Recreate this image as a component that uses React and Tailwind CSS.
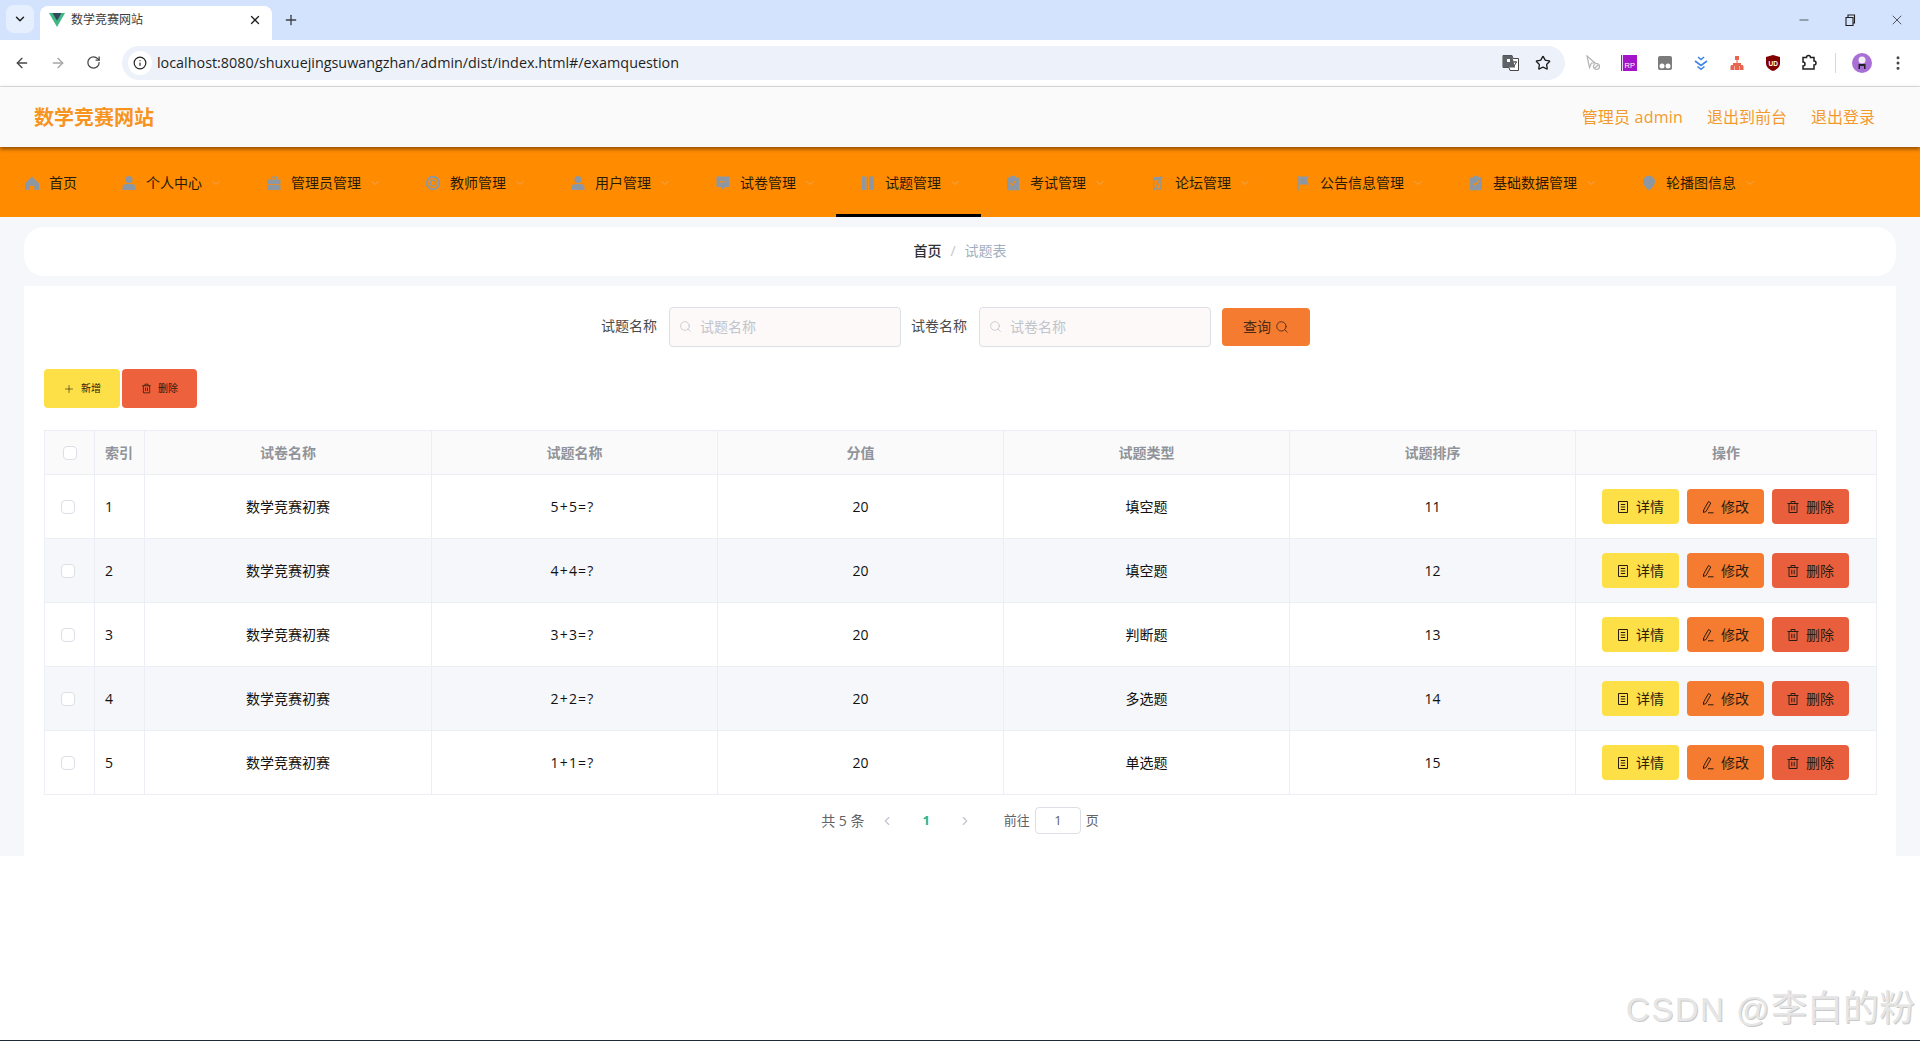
import React from "react"
import { ArrowLeft, ArrowRight, ChevronDown, ChevronLeft, ChevronRight, EllipsisVertical, Info, Minus, Plus, RotateCw, Search, Star, X } from "lucide-react"

const HomeIcon = () => <path d="M8 1.5 15 8.2V15h-4.6v-4.2H5.6V15H1V8.2z" />
const UserIcon = () => <><circle cx="8" cy="4.6" r="3.6" /><path d="M1.5 15v-2.6C1.5 10 3.5 9 5 9h6c1.5 0 3.5 1 3.5 3.4V15z" /></>
const CaseIcon = () => <><path d="M5 1.5h6v3H9.8V2.8H6.2v1.7H5z" /><path d="M1.5 4.5h13v4.4h-13zM1.5 9.8h13V15h-13z" /></>
const RingIcon = () => <path fillRule="evenodd" d="M8 .8a7.2 7.2 0 1 1 0 14.4A7.2 7.2 0 0 1 8 .8zm0 2a5.2 5.2 0 1 0 0 10.4A5.2 5.2 0 0 0 8 2.800zm0 1.700a3.500 3.500 0 1 1 0 7 3.500 3.500 0 0 1 0-7zm0 1.300a2.200 2.200 0 1 0 0 4.400 2.200 2.200 0 0 0 0-4.400z" />
const CommentIcon = () => <path fillRule="evenodd" d="M1.500 1.500h13v10.500H10L8 15l-2-3H1.500zM5 6v1.500h1.500V6zm2.300 0v1.500h1.500V6zm2.300 0v1.500h1.500V6z" />
const BarsIcon = () => <path d="M2 1.500h3.500V15H2zM6.500 1.500H8V15H6.500zM9 1.500h5V15H9z" />
const ClaimIcon = () => <path fillRule="evenodd" d="M5.500.8h5v1.700H14V15.200H2V2.500h3.500zM5 8.500l2.300 2.500L11.200 6l-.8-.7-3.200 4-1.500-1.500z" />
const SlashIcon = () => <path d="M4 2h8.500v1.200l-1 .8V14.500H3V5zM4.200 5.500v7.800h6.100V4.600zM11 .5l1 .5L5 15.500l-1-.5z" />
const FlagIcon = () => <path d="M2.500 1h1.300v14.500H2.500zM4.500 1.500H14L11.500 5 14 9.500H4.500z" />
const PinIcon = () => <path d="M8 .8c3.500 0 6 2.600 6 5.800 0 3.500-3.400 7-6 8.800-2.600-1.800-6-5.300-6-8.800C2 3.400 4.500.8 8 .8z" />

const navItems = [
  { label: "首页", icon: HomeIcon, arrow: false },
  { label: "个人中心", icon: UserIcon, arrow: true },
  { label: "管理员管理", icon: CaseIcon, arrow: true },
  { label: "教师管理", icon: RingIcon, arrow: true },
  { label: "用户管理", icon: UserIcon, arrow: true },
  { label: "试卷管理", icon: CommentIcon, arrow: true },
  { label: "试题管理", icon: BarsIcon, arrow: true, active: true },
  { label: "考试管理", icon: ClaimIcon, arrow: true },
  { label: "论坛管理", icon: SlashIcon, arrow: true },
  { label: "公告信息管理", icon: FlagIcon, arrow: true },
  { label: "基础数据管理", icon: ClaimIcon, arrow: true },
  { label: "轮播图信息", icon: PinIcon, arrow: true },
]

const rows = [
  { id: 1, paper: "数学竞赛初赛", name: "5+5=?", score: 20, type: "填空题", sort: 11 },
  { id: 2, paper: "数学竞赛初赛", name: "4+4=?", score: 20, type: "填空题", sort: 12 },
  { id: 3, paper: "数学竞赛初赛", name: "3+3=?", score: 20, type: "判断题", sort: 13 },
  { id: 4, paper: "数学竞赛初赛", name: "2+2=?", score: 20, type: "多选题", sort: 14 },
  { id: 5, paper: "数学竞赛初赛", name: "1+1=?", score: 20, type: "单选题", sort: 15 },
]

function TicketIcon() {
  return (
    <svg width="14" height="14" viewBox="0 0 14 14" fill="none" stroke="currentColor" strokeWidth="1">
      <path d="M2.500 1.500h9v11h-9zM4.800 4.500h4.400M4.800 7h4.400M4.800 9.500h4.400" />
    </svg>
  )
}

function EditIcon() {
  return (
    <svg width="14" height="14" viewBox="0 0 14 14" fill="none" stroke="currentColor" strokeWidth="1">
      <path d="M7.500 1.500 9.800 3 5 11.500l-2.600 1L2.700 10zM7 12.800h5.500" />
    </svg>
  )
}

function TrashIcon({ size = 14 }) {
  return (
    <svg width={size} height={size} viewBox="0 0 14 14" fill="none" stroke="currentColor" strokeWidth="1">
      <path d="M1.500 3.500h11M5 3.500V1.500h4v2M3 3.500v9h8v-9M5.800 5.800v4.500M8.200 5.800v4.500" />
    </svg>
  )
}

function NavBar() {
  return (
    <nav className="flex h-[70px] items-stretch bg-[#ff8c00] text-sm text-[#2a1a08]">
      {navItems.map((item) => {
        const Icon = item.icon
        return (
          <div
            key={item.label}
            className={`flex items-center border-b-[3px] pl-6 pt-1 pr-5 ${item.active ? "border-black" : "border-transparent"}`}
          >
            <svg width="16" height="16" viewBox="0 0 16 16" fill="#8d97a3" className="mr-[9px] shrink-0">
              <Icon />
            </svg>
            <span>{item.label}</span>
            {item.arrow && <ChevronDown size={12} strokeWidth={1.5} className="ml-2 text-[#dcb183]" />}
          </div>
        )
      })}
    </nav>
  )
}

function BrowserChrome() {
  return (
    <>
      <div className="flex h-10 items-end bg-[#d3e3fd] pl-[6px]">
        <div className="mb-[7px] flex h-7 w-7 items-center justify-center rounded-lg bg-[#e6effd]">
          <ChevronDown size={14} strokeWidth={2.5} className="text-[#1f1f1f]" />
        </div>
        <div className="ml-[6px] flex h-[34px] w-[232px] items-center rounded-t-lg bg-white pb-[6px] pl-[9px] pr-[10px] text-xs text-[#3c3c3c]">
          <svg width="16" height="14" viewBox="0 0 16 14" className="mr-[6px] shrink-0">
            <path d="M0 0h16L8 14z" fill="#41b883" />
            <path d="M3.500 0h9L8 7.800z" fill="#35495e" />
          </svg>
          <span>数学竞赛网站</span>
          <X size={14} strokeWidth={2.2} className="ml-auto text-[#1f1f1f]" />
        </div>
        <Plus size={16} strokeWidth={2} className="mb-3 ml-[11px] text-[#3c4043]" />
        <div className="mb-3 ml-auto flex items-center gap-8 pr-[15px] text-[#1f1f1f]">
          <Minus size={14} strokeWidth={1.2} />
          <svg width="14" height="14" viewBox="0 0 14 14" fill="none" stroke="currentColor" strokeWidth="1.100">
            <path d="M3 4.500h7v8H3zM5 4.500V2h6.500v8H10" />
          </svg>
          <X size={16} strokeWidth={1.1} />
        </div>
      </div>
      <div className="flex h-[47px] items-center border-b border-[#dfe1e5] bg-white pb-px">
        <div className="flex w-[122px] shrink-0 items-center gap-5 pl-[14px]">
          <ArrowLeft size={16} strokeWidth={2} className="text-[#474747]" />
          <ArrowRight size={16} strokeWidth={2} className="text-[#a6a6a6]" />
          <RotateCw size={15} strokeWidth={2} className="text-[#474747]" />
        </div>
        <div className="flex h-[34px] w-[1443px] shrink-0 items-center rounded-full bg-[#edf2fa] pl-[6px] pr-[14px]">
          <div className="flex h-6 w-6 items-center justify-center rounded-full bg-white">
            <Info size={14} strokeWidth={2} className="text-[#1f1f1f]" />
          </div>
          <span className="ml-[5px] text-[14.35px] text-[#1f1f1f]">localhost:8080/shuxuejingsuwangzhan/admin/dist/index.html#/examquestion</span>
          <svg width="18" height="18" viewBox="0 0 18 18" className="ml-auto mr-[15px]">
            <path d="M1 1.500h9l1 3H16.500v12H8l-1-3H1z" fill="#fff" stroke="#474747" strokeWidth="1" />
            <path d="M1 1.500h9l3 12H1z" fill="#5f6368" />
            <path d="M5 5h3v3H5z" fill="#fff" />
            <path d="M11 8h4M13 7v1M11.500 13l3-5" stroke="#474747" strokeWidth="1" fill="none" />
          </svg>
          <Star size={16} strokeWidth={2} className="text-[#1f1f1f]" />
        </div>
        <div className="flex w-[270px] shrink-0 items-center gap-5 pl-[20px]">
          <svg width="16" height="16" viewBox="0 0 16 16" fill="none" stroke="#b4b4b4" strokeWidth="1.200">
            <path d="M2 1l8 7H6.500L4.500 12.500z" />
            <circle cx="11.500" cy="11.500" r="3" />
            <path d="M9.500 13.500l4-4" />
          </svg>
          <svg width="16" height="16" viewBox="0 0 16 16">
            <path d="M0 0h16v16H0z" fill="#a414c9" />
            <path d="M1.500 0v16" stroke="#f1d8f7" strokeWidth="1" />
            <text x="3.500" y="13" fontSize="7.500" fill="#fff" fontFamily="Liberation Sans">RP</text>
          </svg>
          <svg width="16" height="16" viewBox="0 0 16 16">
            <path d="M3 1h10a2 2 0 0 1 2 2v10a2 2 0 0 1-2 2H3a2 2 0 0 1-2-2V3a2 2 0 0 1 2-2z" fill="#7b7b7b" />
            <circle cx="5" cy="11" r="2.500" fill="#fff" />
            <circle cx="11" cy="11" r="2.500" fill="#fff" />
          </svg>
          <svg width="16" height="16" viewBox="0 0 16 16" fill="none" stroke="#3f84e5" strokeWidth="1.600">
            <path d="M5 2l3 2.500L11 2M2 6l6 4.500L14 6M4.500 11.500 8 14.300l3.500-2.800" />
          </svg>
          <svg width="16" height="16" viewBox="0 0 16 16" fill="#e8654f">
            <path d="M6 1h4v4H6zM7.500 5h1v3h-1zM2 10h12v1H2zM1.500 11h4v4h-4zM6 11h4v4H6zM10.500 11h4v4h-4zM4 8h8v2H4z" />
          </svg>
          <svg width="16" height="16" viewBox="0 0 16 16">
            <path d="M8 0l7 2v6c0 4-3 6.500-7 8-4-1.500-7-4-7-8V2z" fill="#800000" />
            <text x="3.500" y="10.500" fontSize="6.500" fill="#fff" fontWeight="700" fontFamily="Liberation Sans">UD</text>
          </svg>
          <svg width="17" height="17" viewBox="0 0 17 17" fill="none" stroke="#1f1f1f" strokeWidth="1.500">
            <path d="M2 3.500h3.500a2 2 0 0 1 4 0H13v3.500a2 2 0 0 1 0 4V15H2v-3a2 2 0 0 0 0-4z" />
          </svg>
        </div>
        <div className="h-5 w-px bg-[#d0d7e5]" />
        <div className="ml-4 flex h-5 w-5 items-center justify-center rounded-full bg-[#a86fd6]">
          <svg width="12" height="14" viewBox="0 0 12 14">
            <circle cx="6" cy="4" r="3.500" fill="#f2f2f2" />
            <path d="M2.500 13V8h7v5H8V10H4v3z" fill="#222" />
          </svg>
        </div>
        <EllipsisVertical size={18} strokeWidth={2} className="ml-[17px] text-[#474747]" />
      </div>
    </>
  )
}

function SearchBox({ placeholder }) {
  return (
    <div className="relative w-[232px]">
      <Search size={13} strokeWidth={1.500} className="absolute left-[10px] top-[13px] text-[#c0c4cc]" />
      <input
        placeholder={placeholder}
        className="h-10 w-full rounded border border-[#dcdfe6] bg-[#fdf9f8] pb-[2px] pl-[30px] pr-3 text-sm outline-none placeholder:text-[#c0c4cc]"
      />
    </div>
  )
}

function Checkbox({ className }) {
  return <span className={`block h-[14px] w-[14px] rounded-sm border border-[#dcdfe6] bg-white ${className}`} />
}

function ActionButton({ color, icon, label }) {
  return (
    <button className={`flex h-[35px] w-[77px] items-center justify-center gap-[6px] rounded text-sm text-[#2a1c10] ${color}`}>
      {icon}
      <span>{label}</span>
    </button>
  )
}

const headers = ["试卷名称", "试题名称", "分值", "试题类型", "试题排序", "操作"]

export default function App() {
  return (
    <div className="relative flex h-[1041px] flex-col overflow-hidden bg-white font-['Open_Sans','Noto_Sans_CJK_SC',sans-serif]">
      <BrowserChrome />
      <header className="relative z-10 flex h-[60px] items-center justify-between bg-[#fafafa] pl-[34px] pr-[45px] shadow-[0_2px_4px_rgba(60,30,0,0.6)]">
        <div className="pt-[2px] text-xl font-bold text-[#f7941d]">数学竞赛网站</div>
        <div className="flex gap-6 text-base text-[#f39a2e]">
          <span className="tracking-[0.2px]">管理员 admin</span>
          <span>退出到前台</span>
          <span>退出登录</span>
        </div>
      </header>
      <NavBar />
      <main className="h-[639px] bg-[#f5f7fa] px-6 pt-[10px]">
        <div className="flex h-[49px] items-center justify-center rounded-[20px] bg-white pb-[2px] text-sm">
          <span className="font-medium text-[#303133]">首页</span>
          <span className="mx-[9px] text-[#c0c4cc]">/</span>
          <span className="text-[#a3afc0]">试题表</span>
        </div>
        <section className="mt-[10px] h-[570px] bg-white px-5 pt-[21px]">
          <div className="flex h-10 items-center justify-center pr-[9px] text-sm text-[#4a4a4a]">
            <span className="mr-3 pb-[2px]">试题名称</span>
            <SearchBox placeholder="试题名称" />
            <span className="ml-[10px] mr-3 pb-[2px]">试卷名称</span>
            <SearchBox placeholder="试卷名称" />
            <button className="ml-[11px] flex h-[38px] w-[88px] items-center justify-center gap-1 rounded-sm bg-[#f47b2f] text-sm text-[#4a2a14]">
              查询
              <Search size={14} strokeWidth={1.500} />
            </button>
          </div>
          <div className="mt-[22px] flex gap-[2px]">
            <button className="flex h-[39px] w-[76px] items-center justify-center gap-[6px] rounded bg-[#fde047] text-[10px] text-[#2a1c10]">
              <Plus size={12} strokeWidth={1.200} />
              新增
            </button>
            <button className="flex h-[39px] w-[75px] items-center justify-center gap-[6px] rounded bg-[#ee613d] text-[10px] text-[#2a1c10]">
              <TrashIcon size={11} />
              删除
            </button>
          </div>
          <table className="mt-[22px] w-[1832px] table-fixed border-collapse text-sm">
            <colgroup>
              <col className="w-[50px]" />
              <col className="w-[50px]" />
              <col className="w-[287px]" />
              <col className="w-[286px]" />
              <col className="w-[286px]" />
              <col className="w-[286px]" />
              <col className="w-[286px]" />
              <col className="w-[301px]" />
            </colgroup>
            <thead>
              <tr className="h-11 bg-[#fafafa] text-[#909399]">
                <th className="border border-[#ebeef5]">
                  <Checkbox className="ml-[18px]" />
                </th>
                <th className="border border-[#ebeef5] pl-[10px] text-left font-bold">索引</th>
                {headers.map((h) => (
                  <th key={h} className="border border-[#ebeef5] font-bold">{h}</th>
                ))}
              </tr>
            </thead>
            <tbody className="text-[#111111]">
              {rows.map((row) => (
                <tr key={row.id} className={`h-16 ${row.id % 2 === 0 ? "bg-[#f5f7fa]" : "bg-white"}`}>
                  <td className="border border-[#ebeef5]">
                    <Checkbox className="ml-4" />
                  </td>
                  <td className="border border-[#ebeef5] pl-[10px]">{row.id}</td>
                  <td className="border border-[#ebeef5] text-center">{row.paper}</td>
                  <td className="border border-[#ebeef5] pr-1 text-center tracking-[1.2px]">{row.name}</td>
                  <td className="border border-[#ebeef5] text-center">{row.score}</td>
                  <td className="border border-[#ebeef5] text-center">{row.type}</td>
                  <td className="border border-[#ebeef5] text-center">{row.sort}</td>
                  <td className="border border-[#ebeef5]">
                    <div className="flex justify-center gap-2 pr-[2px]">
                      <ActionButton color="bg-[#fde047]" icon={<TicketIcon />} label="详情" />
                      <ActionButton color="bg-[#f47b2f]" icon={<EditIcon />} label="修改" />
                      <ActionButton color="bg-[#e95f3e]" icon={<TrashIcon />} label="删除" />
                    </div>
                  </td>
                </tr>
              ))}
            </tbody>
          </table>
          <div className="mt-3 flex h-[27px] items-center justify-center text-[13px] text-[#606266]">
            <span className="text-sm">共 5 条</span>
            <ChevronLeft size={14} className="ml-4 text-[#c0c4cc]" />
            <span className="mx-7 font-bold text-[#2bb58f]">1</span>
            <ChevronRight size={14} className="text-[#c0c4cc]" />
            <span className="ml-8">前往</span>
            <div className="mx-[5px] flex h-[27px] w-[46px] items-center justify-center rounded border border-[#dcdfe6]">1</div>
            <span>页</span>
          </div>
        </section>
      </main>
      <div className="absolute bottom-[14px] right-[5px] text-4xl leading-none text-[#e6e6e6] [text-shadow:1px_1px_0_#c9c9c9] font-['Liberation_Sans','Noto_Sans_CJK_SC',sans-serif]">
        <span className="text-[33px] tracking-[1.5px]">CSDN @</span>李白的粉
      </div>
      <div className="absolute bottom-0 left-0 h-px w-full bg-[#1c2b33]" />
    </div>
  )
}
